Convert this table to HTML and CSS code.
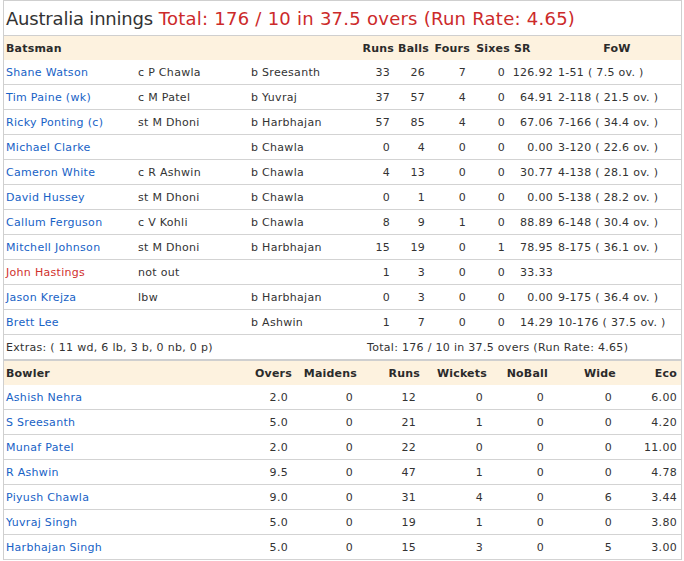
FILE: index.html
```html
<!DOCTYPE html>
<html>
<head>
<meta charset="utf-8">
<link rel="stylesheet" href="styles.css">
</head>
<body>
<div class="card">
  <div class="title"><span class="team">Australia innings</span> <span class="total">Total: 176 / 10 in 37.5 overs (Run Rate: 4.65)</span></div>

  <div class="row bat head">
    <div class="c name">Batsman</div><div class="c how"></div><div class="c bwl"></div>
    <div class="c runs">Runs</div><div class="c balls">Balls</div><div class="c fours">Fours</div><div class="c sixes">Sixes</div>
    <div class="c sr">SR</div><div class="c fow">FoW</div>
  </div>

  <div class="row bat"><div class="c name"><a>Shane Watson</a></div><div class="c how">c P Chawla</div><div class="c bwl">b Sreesanth</div><div class="c runs">33</div><div class="c balls">26</div><div class="c fours">7</div><div class="c sixes">0</div><div class="c sr">126.92</div><div class="c fow">1-51 ( 7.5 ov. )</div></div>
  <div class="row bat"><div class="c name"><a>Tim Paine (wk)</a></div><div class="c how">c M Patel</div><div class="c bwl">b Yuvraj</div><div class="c runs">37</div><div class="c balls">57</div><div class="c fours">4</div><div class="c sixes">0</div><div class="c sr">64.91</div><div class="c fow">2-118 ( 21.5 ov. )</div></div>
  <div class="row bat"><div class="c name"><a>Ricky Ponting (c)</a></div><div class="c how">st M Dhoni</div><div class="c bwl">b Harbhajan</div><div class="c runs">57</div><div class="c balls">85</div><div class="c fours">4</div><div class="c sixes">0</div><div class="c sr">67.06</div><div class="c fow">7-166 ( 34.4 ov. )</div></div>
  <div class="row bat"><div class="c name"><a>Michael Clarke</a></div><div class="c how"></div><div class="c bwl">b Chawla</div><div class="c runs">0</div><div class="c balls">4</div><div class="c fours">0</div><div class="c sixes">0</div><div class="c sr">0.00</div><div class="c fow">3-120 ( 22.6 ov. )</div></div>
  <div class="row bat"><div class="c name"><a>Cameron White</a></div><div class="c how">c R Ashwin</div><div class="c bwl">b Chawla</div><div class="c runs">4</div><div class="c balls">13</div><div class="c fours">0</div><div class="c sixes">0</div><div class="c sr">30.77</div><div class="c fow">4-138 ( 28.1 ov. )</div></div>
  <div class="row bat"><div class="c name"><a>David Hussey</a></div><div class="c how">st M Dhoni</div><div class="c bwl">b Chawla</div><div class="c runs">0</div><div class="c balls">1</div><div class="c fours">0</div><div class="c sixes">0</div><div class="c sr">0.00</div><div class="c fow">5-138 ( 28.2 ov. )</div></div>
  <div class="row bat"><div class="c name"><a>Callum Ferguson</a></div><div class="c how">c V Kohli</div><div class="c bwl">b Chawla</div><div class="c runs">8</div><div class="c balls">9</div><div class="c fours">1</div><div class="c sixes">0</div><div class="c sr">88.89</div><div class="c fow">6-148 ( 30.4 ov. )</div></div>
  <div class="row bat"><div class="c name"><a>Mitchell Johnson</a></div><div class="c how">st M Dhoni</div><div class="c bwl">b Harbhajan</div><div class="c runs">15</div><div class="c balls">19</div><div class="c fours">0</div><div class="c sixes">1</div><div class="c sr">78.95</div><div class="c fow">8-175 ( 36.1 ov. )</div></div>
  <div class="row bat"><div class="c name"><a class="notout">John Hastings</a></div><div class="c how">not out</div><div class="c bwl"></div><div class="c runs">1</div><div class="c balls">3</div><div class="c fours">0</div><div class="c sixes">0</div><div class="c sr">33.33</div><div class="c fow"></div></div>
  <div class="row bat"><div class="c name"><a>Jason Krejza</a></div><div class="c how">lbw</div><div class="c bwl">b Harbhajan</div><div class="c runs">0</div><div class="c balls">3</div><div class="c fours">0</div><div class="c sixes">0</div><div class="c sr">0.00</div><div class="c fow">9-175 ( 36.4 ov. )</div></div>
  <div class="row bat"><div class="c name"><a>Brett Lee</a></div><div class="c how"></div><div class="c bwl">b Ashwin</div><div class="c runs">1</div><div class="c balls">7</div><div class="c fours">0</div><div class="c sixes">0</div><div class="c sr">14.29</div><div class="c fow">10-176 ( 37.5 ov. )</div></div>

  <div class="row extras">
    <div class="c ex">Extras: ( 11 wd, 6 lb, 3 b, 0 nb, 0 p)</div>
    <div class="c tot">Total: 176 / 10 in 37.5 overs (Run Rate: 4.65)</div>
  </div>

  <div class="row bowl head">
    <div class="c bname">Bowler</div><div class="c ov">Overs</div><div class="c md">Maidens</div><div class="c br">Runs</div><div class="c wk">Wickets</div><div class="c nb">NoBall</div><div class="c wd">Wide</div><div class="c eco">Eco</div>
  </div>
  <div class="row bowl"><div class="c bname"><a>Ashish Nehra</a></div><div class="c ov">2.0</div><div class="c md">0</div><div class="c br">12</div><div class="c wk">0</div><div class="c nb">0</div><div class="c wd">0</div><div class="c eco">6.00</div></div>
  <div class="row bowl"><div class="c bname"><a>S Sreesanth</a></div><div class="c ov">5.0</div><div class="c md">0</div><div class="c br">21</div><div class="c wk">1</div><div class="c nb">0</div><div class="c wd">0</div><div class="c eco">4.20</div></div>
  <div class="row bowl"><div class="c bname"><a>Munaf Patel</a></div><div class="c ov">2.0</div><div class="c md">0</div><div class="c br">22</div><div class="c wk">0</div><div class="c nb">0</div><div class="c wd">0</div><div class="c eco">11.00</div></div>
  <div class="row bowl"><div class="c bname"><a>R Ashwin</a></div><div class="c ov">9.5</div><div class="c md">0</div><div class="c br">47</div><div class="c wk">1</div><div class="c nb">0</div><div class="c wd">0</div><div class="c eco">4.78</div></div>
  <div class="row bowl"><div class="c bname"><a>Piyush Chawla</a></div><div class="c ov">9.0</div><div class="c md">0</div><div class="c br">31</div><div class="c wk">4</div><div class="c nb">0</div><div class="c wd">6</div><div class="c eco">3.44</div></div>
  <div class="row bowl"><div class="c bname"><a>Yuvraj Singh</a></div><div class="c ov">5.0</div><div class="c md">0</div><div class="c br">19</div><div class="c wk">1</div><div class="c nb">0</div><div class="c wd">0</div><div class="c eco">3.80</div></div>
  <div class="row bowl"><div class="c bname"><a>Harbhajan Singh</a></div><div class="c ov">5.0</div><div class="c md">0</div><div class="c br">15</div><div class="c wk">3</div><div class="c nb">0</div><div class="c wd">5</div><div class="c eco">3.00</div></div>
</div>
</body>
</html>
```

FILE: styles.css
```css
html, body {
  margin: 0;
  padding: 0;
  background: #fff;
}
body {
  padding: 0 2px 0 3px;
  font-family: "DejaVu Sans", Verdana, sans-serif;
  font-size: 11px;
  letter-spacing: 0.3px;
  color: #333;
}
.card {
  width: 677px;
  border: 1px solid #cfcfcf;
  border-bottom: none;
}
.title {
  height: 34px;
  line-height: 36px;
  padding-left: 2px;
  font-size: 18px;
  letter-spacing: 0;
  border-bottom: 1px solid #cfcfcf;
  white-space: nowrap;
}
.team { color: #333; letter-spacing: -0.2px; }
.total { color: #cc2a2a; letter-spacing: 0.25px; }

.row {
  display: flex;
  align-items: center;
  height: 24px;
  border-bottom: 1px solid #d3d3d3;
  white-space: nowrap;
}
.row.head {
  background: #fdf2df;
  border-bottom: none;
  font-weight: bold;
  color: #2b2b2b;
  letter-spacing: 0.2px;
}
.c { box-sizing: border-box; }
a { color: #1762c6; text-decoration: none; }
a.notout { color: #d0312d; }

/* batting */
.bat .name { width: 132px; padding-left: 2px; }
.bat .how { width: 113px; padding-left: 2px; }
.bat .bwl { width: 106px; padding-left: 2px; }
.bat .runs { width: 39px; text-align: right; padding-right: 4px; }
.bat .balls { width: 35px; text-align: right; padding-right: 4px; }
.bat .fours { width: 41px; text-align: right; padding-right: 4px; }
.bat .sixes { width: 40px; text-align: right; padding-right: 5px; }
.bat .sr { flex: 1 1 0; min-width: 0; text-align: right; }
.bat .fow { flex: 0 0 auto; min-width: 128px; padding-left: 5px; padding-right: 12px; }
.bat.head .runs, .bat.head .balls, .bat.head .fours, .bat.head .sixes { padding-right: 0; }
.bat.head .sr { text-align: left; padding-left: 4px; }
.bat.head .fow { text-align: center; padding: 0; }

/* extras */
.extras { border-bottom: 2px solid #cfcfcf; }
.extras .ex { width: 363px; padding-left: 2px; }
.extras .tot { flex: 1; }

/* bowling */
.bowl .bname { width: 248px; padding-left: 2px; }
.bowl .ov { width: 40px; }
.bowl .md { width: 65px; }
.bowl .br { width: 63px; }
.bowl .wk { width: 67px; }
.bowl .nb { width: 61px; }
.bowl .wd { width: 68px; }
.bowl .eco { width: 65px; }
.bowl .c:not(.bname) { text-align: right; padding-right: 4px; }
.bowl.head .c:not(.bname) { padding-right: 0; }
.bowl.head .c.eco { padding-right: 4px; }
```
